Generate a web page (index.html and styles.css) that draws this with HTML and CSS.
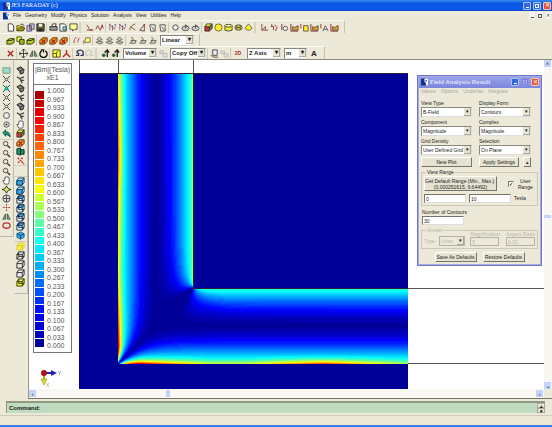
FILE: index.html
```html
<!DOCTYPE html>
<html lang="en">
<head>
    <meta charset="UTF-8">
    <meta name="viewport" content="width=device-width, initial-scale=1.0">
    <title>JES FARADAY (c)</title>
    <link rel="stylesheet" href="styles.css">
</head>
<body>
    <!-- Icon set -->
    <svg class="icon-defs" aria-hidden="true">
        <symbol id="new" viewBox="0 0 10 10"><path d="M2.500 1h4l2 2v6h-6z" fill="#fff" stroke="#333"/></symbol>
        <symbol id="open" viewBox="0 0 10 10"><path d="M1 8.500V3h3l1 1h3v4.500z" fill="#ed3" stroke="#550"/><path d="M1 8.500l2-3h7l-2 3z" fill="#aa2" stroke="#440"/><path d="M5 2l2-1 2 2" fill="none" stroke="#222"/></symbol>
        <symbol id="import" viewBox="0 0 10 10"><path d="M1 3h5v6H1zM4 1h5v6H4z" fill="#ccd" stroke="#447"/><path d="M3 5h4" stroke="#c44"/></symbol>
        <symbol id="save" viewBox="0 0 10 10"><path d="M1 1h8v8H1z" fill="#663" stroke="#111"/><path d="M3 1h4v3H3z" fill="#eee"/><path d="M3 6h4v3H3z" fill="#222"/></symbol>
        <symbol id="print" viewBox="0 0 10 10"><path d="M3 4l1-3h4L7 4z" fill="#fff" stroke="#333"/><path d="M1 4h8v4H1z" fill="#999" stroke="#333"/></symbol>
        <symbol id="preview" viewBox="0 0 10 10"><path d="M1 1h5l2 2v6H1z" fill="#fff" stroke="#333"/><circle cx="6" cy="6" r="2" fill="#8dd" stroke="#244"/></symbol>
        <symbol id="note" viewBox="0 0 10 10"><path d="M1 1h8v6H6L4 9V7H1z" fill="#ff9" stroke="#444"/></symbol>
        <symbol id="line" viewBox="0 0 10 10"><path d="M2 2l3 5 4 1H2" fill="none" stroke="#844"/></symbol>
        <symbol id="spline" viewBox="0 0 10 10"><path d="M1 7l2-4 3 5 2-6 1 4" fill="none" stroke="#833"/></symbol>
        <symbol id="points" viewBox="0 0 10 10"><path d="M2 1v7M5 3v6M8 1v4" stroke="#338" stroke-dasharray="2 1"/><path d="M2 2l6 5" stroke="#b33"/></symbol>
        <symbol id="arc" viewBox="0 0 10 10"><path d="M2 8c0-4 3-6 6-7M3 4l5 4" fill="none" stroke="#743"/></symbol>
        <symbol id="wedge" viewBox="0 0 10 10"><path d="M2 8l5-6v7z" fill="#eed" stroke="#544"/><circle cx="7" cy="2" r="1" fill="#a33"/></symbol>
        <symbol id="page" viewBox="0 0 10 10"><path d="M2 2h6v7H3zM4 4l3 4" fill="#eee" stroke="#554"/></symbol>
        <symbol id="circle" viewBox="0 0 10 10"><circle cx="5" cy="5" r="3" fill="#eee" stroke="#444"/></symbol>
        <symbol id="disc" viewBox="0 0 10 10"><ellipse cx="5" cy="6" rx="4" ry="2.500" fill="#ccc" stroke="#555"/><path d="M5 6V2l3 2" fill="none" stroke="#555"/></symbol>
        <symbol id="cube" viewBox="0 0 10 10"><path d="M1 4h5v5H1z" fill="#c33"/><path d="M1 4l2-3h6L6 4z" fill="#ee3"/><path d="M6 4l3-3v5L6 9z" fill="#484"/><path d="M1 4h5v5H1zM1 4l2-3h6v5L6 9M6 4l3-3" fill="none" stroke="#432"/></symbol>
        <symbol id="sphere" viewBox="0 0 10 10"><circle cx="5" cy="5" r="4" fill="#fe2" stroke="#663"/></symbol>
        <symbol id="cylinder" viewBox="0 0 10 10"><path d="M1 3v5q4 2 8 0V3" fill="#ee3" stroke="#443"/><ellipse cx="5" cy="3" rx="4" ry="1.500" fill="#ff8" stroke="#443"/></symbol>
        <symbol id="torus" viewBox="0 0 10 10"><ellipse cx="5" cy="5" rx="4" ry="3" fill="#dd4" stroke="#443"/><path d="M2 4l6 2M2 6l6-2" stroke="#443"/></symbol>
        <symbol id="cone" viewBox="0 0 10 10"><path d="M5 1l4 5q-4 4-8 0z" fill="#fe3" stroke="#663"/></symbol>
        <symbol id="coil" viewBox="0 0 10 10"><path d="M2 1v7h7M2 8l4-4v4" fill="none" stroke="#844"/></symbol>
        <symbol id="probe" viewBox="0 0 10 10"><path d="M2 1v3M1 4h3v4M5 2l3 3-2 4" fill="none" stroke="#833"/></symbol>
        <symbol id="probe-disc" viewBox="0 0 10 10"><path d="M2 1v7" stroke="#922"/><circle cx="6" cy="6" r="2.500" fill="#eee" stroke="#555"/></symbol>
        <symbol id="probe-box" viewBox="0 0 10 10"><path d="M1 1v5" stroke="#922"/><path d="M4 3h5v6H4z" fill="#fe3" stroke="#653"/></symbol>
        <symbol id="probe-fill" viewBox="0 0 10 10"><path d="M1 1v8h8" fill="none" stroke="#722"/><path d="M3 4l2 1 4-2v5H3z" fill="#da3" stroke="#643"/></symbol>
        <symbol id="probe-axis" viewBox="0 0 10 10"><path d="M1 1v5" stroke="#922"/><path d="M3 9l3-6 3 6M4 7h4" fill="none" stroke="#655"/></symbol>
        <symbol id="layer" viewBox="0 0 10 10"><path d="M1 5l3-2h5v4L6 9H1z" fill="#bc2" stroke="#230"/><path d="M1 5h5l3-2" fill="none" stroke="#230"/></symbol>
        <symbol id="layers" viewBox="0 0 10 10"><path d="M1 1h5v5H1z" fill="#ef5" stroke="#350"/><path d="M4 4h5v5H4z" fill="#ab2" stroke="#230"/></symbol>
        <symbol id="layer-red" viewBox="0 0 10 10"><path d="M1 5l3-3h5v4L6 9H1z" fill="#ea2" stroke="#520"/><path d="M3 4l4 4M7 4L3 8" stroke="#b20" stroke-width="1.500"/></symbol>
        <symbol id="slash" viewBox="0 0 10 10"><path d="M2 8q0-5 3-7M8 2L6 7" fill="none" stroke="#a44"/></symbol>
        <symbol id="flag" viewBox="0 0 10 10"><path d="M2 9V5M4 2h5v5H3z" fill="#ff8" stroke="#764"/></symbol>
        <symbol id="surf" viewBox="0 0 10 10"><path d="M1 7l3-1 5 1-3 2zM2 4l3-3 3 3-3 1z" fill="#ccc" stroke="#665"/></symbol>
        <symbol id="surf2" viewBox="0 0 10 10"><path d="M4 1l2 3-4 4 6 0 1-3H3" fill="#dca" stroke="#666"/></symbol>
        <symbol id="cross" viewBox="0 0 10 10"><path d="M2 2l6 6M8 2L2 8" stroke="#a22" stroke-width="1.500"/></symbol>
        <symbol id="move" viewBox="0 0 10 10"><path d="M5 0v10M0 5h10M3 2l2-2 2 2M3 8l2 2 2-2M2 3L0 5l2 2M8 3l2 2-2 2" fill="none" stroke="#333"/></symbol>
        <symbol id="mirror" viewBox="0 0 10 10"><path d="M4 2L1 8h3zM6 2l3 6H6z" fill="#9b9" stroke="#454"/></symbol>
        <symbol id="rotate" viewBox="0 0 10 10"><path d="M3 2a4 4 0 1 0 4 0M2 1h3v3" fill="none" stroke="#111" stroke-width="1.500"/></symbol>
        <symbol id="scale" viewBox="0 0 10 10"><path d="M1 1h8v8H1z" fill="#ff3" stroke="#442"/><path d="M1 5h4v4M4 5l3-3" fill="none" stroke="#442"/></symbol>
        <symbol id="axes" viewBox="0 0 10 10"><path d="M5 1v4L1 9M5 5l4 4" fill="none" stroke="#b22" stroke-width="1.500"/></symbol>
        <symbol id="undo" viewBox="0 0 10 10"><path d="M1 7h3V5q-3-1-1-3 4-2 6 1v4H6" fill="none" stroke="#336" stroke-width="1.500"/></symbol>
        <symbol id="redo" viewBox="0 0 10 10"><path d="M9 7H6V5q3-1 1-3-4-2-6 1v4h3" fill="none" stroke="#bbb"/></symbol>
        <symbol id="snap" viewBox="0 0 10 10"><path d="M7 1v8M4 4l3-3 2 3" fill="none" stroke="#222" stroke-width="1.500"/><circle cx="3" cy="7" r="2" fill="#363"/></symbol>
        <symbol id="copy" viewBox="0 0 10 10"><path d="M3 1h5v6H3zM1 7l3 2h5" fill="#eee" stroke="#444"/></symbol>
        <symbol id="copy-off" viewBox="0 0 10 10"><path d="M1 2h4v3H1zM4 5h5v4H5z" fill="#ddd" stroke="#bbb"/></symbol>
        <symbol id="grid" viewBox="0 0 10 10"><path d="M1 2h8v6H1z" fill="#9dc" stroke="#797"/></symbol>
        <symbol id="fit" viewBox="0 0 10 10"><path d="M1 1l3 3M9 1L6 4M1 9l3-3M9 9L6 6" stroke="#333"/><circle cx="5" cy="5" r="1.500" fill="#eee" stroke="#444"/></symbol>
        <symbol id="fit-teal" viewBox="0 0 10 10"><path d="M1 1l8 8M9 1L1 9" stroke="#133"/><path d="M5 1l3 6H2z" fill="#2a9"/></symbol>
        <symbol id="square" viewBox="0 0 10 10"><rect x="2" y="2" width="6" height="6" rx="2" fill="#eee" stroke="#444"/></symbol>
        <symbol id="target" viewBox="0 0 10 10"><circle cx="5" cy="5" r="3" fill="#ddd" stroke="#555"/><circle cx="5" cy="5" r="1" fill="#333"/></symbol>
        <symbol id="back" viewBox="0 0 10 10"><path d="M1 4l3-3v2q5 0 5 6-2-3-5-3v2z" fill="#298" stroke="#154"/></symbol>
        <symbol id="lens" viewBox="0 0 10 10"><circle cx="4" cy="4" r="2.500" fill="#edd" stroke="#544"/><path d="M6 6l3 3" stroke="#333" stroke-width="1.500"/></symbol>
        <symbol id="hand" viewBox="0 0 10 10"><path d="M3 9L1 5h2V2h1V1h3v1h1v5L7 9z" fill="#fff" stroke="#555"/></symbol>
        <symbol id="orbit" viewBox="0 0 10 10"><path d="M5 1l2 3 3 1-3 1-2 3-2-3-3-1 3-1z" fill="#dd6" stroke="#232"/></symbol>
        <symbol id="globe" viewBox="0 0 10 10"><circle cx="5" cy="5" r="4" fill="#ddd" stroke="#444"/><path d="M5 1v8M1 5h8" stroke="#444"/></symbol>
        <symbol id="origin" viewBox="0 0 10 10"><path d="M5 1v8M1 5h8" stroke="#a33" stroke-dasharray="2 1"/></symbol>
        <symbol id="ring" viewBox="0 0 10 10"><ellipse cx="5" cy="5" rx="4" ry="3" fill="none" stroke="#b33" stroke-width="1.500"/></symbol>
        <symbol id="blob" viewBox="0 0 10 10"><path d="M1 3l4-2 4 3-1 4-3 1-1-3z" fill="#555" stroke="#222"/><path d="M3 3l3 1M6 7l2-1" stroke="#bbb"/></symbol>
        <symbol id="twig" viewBox="0 0 10 10"><path d="M1 2l3 2 5-2M4 4l2 2h3M5 6l2 3" fill="none" stroke="#444" stroke-width="1.500"/></symbol>
        <symbol id="block-teal" viewBox="0 0 10 10"><path d="M1 2l4-1v8L1 8zM5 3h4v5H5z" fill="#196" stroke="#122"/></symbol>
        <symbol id="dots" viewBox="0 0 10 10"><path d="M2 2l3 3-3 3M6 2l2 2M6 6l3 3" fill="none" stroke="#c22" stroke-width="1.500" stroke-dasharray="2 1"/></symbol>
        <symbol id="box-blue" viewBox="0 0 10 10"><path d="M1 4l2-3h6v5L7 9H1z" fill="#9df" stroke="#135"/><path d="M1 4h6v5H1z" fill="#3ae" stroke="#135"/><path d="M7 4l2-3" stroke="#135"/></symbol>
        <symbol id="box-top" viewBox="0 0 10 10"><path d="M1 4l2-3h6v5L7 9H1z" fill="#eff" stroke="#124"/><path d="M1 4l2-3h6L7 4z" fill="#3ae" stroke="#124"/><path d="M7 4v5M3 1v5h6" fill="none" stroke="#124"/></symbol>
        <symbol id="box-iso" viewBox="0 0 10 10"><path d="M5 1l4 2v4L5 9 1 7V3z" fill="#3ae" stroke="#168"/><path d="M1 3l4 2 4-2M5 5v4" fill="none" stroke="#136"/></symbol>
        <symbol id="box-yellow" viewBox="0 0 10 10"><path d="M1 4l2-3h6v5L7 9H1z" fill="#fe3" stroke="#dc4"/><path d="M1 4h6v5" fill="none" stroke="#bb6"/></symbol>
        <symbol id="box-wire" viewBox="0 0 10 10"><path d="M1 4l2-3h6v5L7 9H1zM1 4h6v5M7 4l2-3" fill="#eee" stroke="#222"/></symbol>
        <symbol id="box-frame" viewBox="0 0 10 10"><path d="M1 4l2-3h6v5L7 9H1zM1 4h6v5M7 4l2-3M3 1v5h6M3 6L1 9" fill="#eee" stroke="#222"/></symbol>
        <symbol id="box-edge" viewBox="0 0 10 10"><path d="M1 4l2-3h6v5L7 9H1zM1 4h6v5M7 4l2-3M3 1v5h6" fill="#ee2" stroke="#330"/></symbol>
        <symbol id="logo" viewBox="0 0 10 10"><path d="M0 0h10v10H0z" fill="#12309a"/><path d="M5 0h5v10H7V6L5 5z" fill="#fff"/><path d="M6 2l3 1-2 2z" fill="#12309a"/></symbol>
    </svg>

    <!-- Title bar -->
    <header class="titlebar">
        <svg class="logo"><use href="#logo"/></svg>
        <h1>JES FARADAY (c)</h1>
        <div class="win-buttons">
            <button aria-label="Minimize"><span class="min"></span></button>
            <button aria-label="Restore"><span class="max"></span></button>
            <button class="close" aria-label="Close">✕</button>
        </div>
    </header>

    <!-- Menu -->
    <nav class="menubar">
        <svg class="logo"><use href="#logo"/></svg>
        <a href="#file">File</a>
        <a href="#geometry">Geometry</a>
        <a href="#modify">Modify</a>
        <a href="#physics">Physics</a>
        <a href="#solution">Solution</a>
        <a href="#analysis">Analysis</a>
        <a href="#view">View</a>
        <a href="#utilities">Utilities</a>
        <a href="#help">Help</a>
        <div class="doc-buttons">
            <button aria-label="Minimize document"><span class="min"></span></button>
            <button aria-label="Restore document"><span class="max"></span></button>
            <button aria-label="Close document">✕</button>
        </div>
    </nav>

    <!-- Toolbars -->
    <div class="toolbars">
        <div class="toolbar">
            <div class="group">
                <button aria-label="New"><svg><use href="#new"/></svg></button>
                <button aria-label="Open"><svg><use href="#open"/></svg></button>
                <button aria-label="Import"><svg><use href="#import"/></svg></button>
                <button aria-label="Save"><svg><use href="#save"/></svg></button>
            </div>
            <div class="group">
                <button aria-label="Print"><svg><use href="#print"/></svg></button>
                <button aria-label="Preview"><svg><use href="#preview"/></svg></button>
                <button aria-label="Note"><svg><use href="#note"/></svg></button>
            </div>
            <div class="group wide">
                <button aria-label="Line"><svg><use href="#line"/></svg></button>
                <button aria-label="Spline"><svg><use href="#spline"/></svg></button>
            </div>
            <div class="group">
                <button aria-label="Points"><svg><use href="#points"/></svg></button>
                <button aria-label="Point list"><svg><use href="#points"/></svg></button>
                <button aria-label="Arc"><svg><use href="#arc"/></svg></button>
                <button aria-label="Wedge"><svg><use href="#wedge"/></svg></button>
                <button aria-label="Polygon"><svg><use href="#page"/></svg></button>
                <button aria-label="Closed polygon"><svg><use href="#page"/></svg></button>
            </div>
            <div class="group">
                <button aria-label="Circle"><svg><use href="#circle"/></svg></button>
                <button aria-label="Disc"><svg><use href="#disc"/></svg></button>
                <button aria-label="Ellipse"><svg><use href="#disc"/></svg></button>
            </div>
            <div class="group">
                <button aria-label="Cube"><svg><use href="#cube"/></svg></button>
                <button aria-label="Sphere"><svg><use href="#sphere"/></svg></button>
                <button aria-label="Cylinder"><svg><use href="#cylinder"/></svg></button>
                <button aria-label="Torus"><svg><use href="#torus"/></svg></button>
                <button aria-label="Cone"><svg><use href="#cone"/></svg></button>
            </div>
            <div class="group wide">
                <button aria-label="Coil"><svg><use href="#coil"/></svg></button>
                <button aria-label="Probe"><svg><use href="#probe"/></svg></button>
                <button aria-label="Probe disc"><svg><use href="#probe-disc"/></svg></button>
                <button aria-label="Probe fill"><svg><use href="#probe-fill"/></svg></button>
                <button aria-label="Probe box"><svg><use href="#probe-box"/></svg></button>
                <button aria-label="Probe volume"><svg><use href="#probe-fill"/></svg></button>
                <button aria-label="Probe axis"><svg><use href="#probe-axis"/></svg></button>
                <button aria-label="Probe all"><svg><use href="#probe-fill"/></svg></button>
            </div>
        </div>
        <div class="toolbar">
            <div class="group">
                <button aria-label="Layer"><svg><use href="#layer"/></svg></button>
                <button aria-label="Layers"><svg><use href="#layers"/></svg></button>
                <button aria-label="Active layer"><svg><use href="#layer"/></svg></button>
            </div>
            <div class="group">
                <button aria-label="Hide layer"><svg><use href="#layer-red"/></svg></button>
                <button aria-label="Lock layer"><svg><use href="#layer-red"/></svg></button>
                <button aria-label="Delete layer"><svg><use href="#layer-red"/></svg></button>
            </div>
            <div class="group">
                <button aria-label="Split"><svg><use href="#slash"/></svg></button>
                <button aria-label="Flag"><svg><use href="#flag"/></svg></button>
            </div>
            <div class="group">
                <button aria-label="Surface"><svg><use href="#surf"/></svg></button>
                <button aria-label="Join surface"><svg><use href="#surf"/></svg></button>
                <button aria-label="Trim surface"><svg><use href="#surf"/></svg></button>
            </div>
            <div class="group">
                <button aria-label="Sweep"><svg><use href="#surf2"/></svg></button>
                <button aria-label="Loft"><svg><use href="#surf2"/></svg></button>
                <button aria-label="Extrude"><svg><use href="#surf2"/></svg></button>
            </div>
            <span class="pick"><select aria-label="Interpolation"><option>Linear</option></select></span>
        </div>
        <div class="toolbar">
            <div class="group">
                <button aria-label="Delete"><svg><use href="#cross"/></svg></button>
            </div>
            <div class="group">
                <button aria-label="Move"><svg><use href="#move"/></svg></button>
                <button aria-label="Mirror"><svg><use href="#mirror"/></svg></button>
                <button aria-label="Rotate"><svg><use href="#rotate"/></svg></button>
            </div>
            <div class="group">
                <button aria-label="Scale"><svg><use href="#scale"/></svg></button>
                <button aria-label="Axes"><svg><use href="#axes"/></svg></button>
            </div>
            <div class="group">
                <button aria-label="Undo"><svg><use href="#undo"/></svg></button>
                <button aria-label="Redo"><svg><use href="#redo"/></svg></button>
            </div>
            <div class="group wide">
                <button aria-label="Snap"><svg><use href="#snap"/></svg></button>
                <button aria-label="Snap to grid"><svg><use href="#snap"/></svg></button>
            </div>
            <span class="pick"><select aria-label="Entity"><option>Volume</option></select></span>
            <button aria-label="Copy selection"><svg><use href="#copy-off"/></svg></button>
            <span class="pick copy-mode"><select aria-label="Copy mode"><option>Copy Off</option></select></span>
            <div class="group">
                <button aria-label="Copy"><svg><use href="#copy"/></svg></button>
                <button aria-label="Paste"><svg><use href="#copy-off"/></svg></button>
            </div>
            <div class="group">
                <button class="two-d">2D</button>
            </div>
            <span class="pick"><select aria-label="Axis"><option>Z Axis</option></select></span>
            <span class="pick unit"><select aria-label="Unit"><option>m</option></select></span>
            <button class="font-a">A</button>
        </div>
    </div>

    <!-- Work area -->
    <main class="work">
        <div class="side">
            <div class="sidebar">
                <button aria-label="Grid"><svg><use href="#grid"/></svg></button>
                <button aria-label="Fit"><svg><use href="#fit"/></svg></button>
                <button aria-label="Fit selection"><svg><use href="#fit-teal"/></svg></button>
                <button aria-label="Expand"><svg><use href="#fit"/></svg></button>
                <button aria-label="Shrink"><svg><use href="#fit"/></svg></button>
                <button aria-label="Window"><svg><use href="#square"/></svg></button>
                <button aria-label="Center"><svg><use href="#target"/></svg></button>
                <button aria-label="Previous view"><svg><use href="#back"/></svg></button>
                <hr>
                <button aria-label="Zoom in"><svg><use href="#lens"/></svg></button>
                <button aria-label="Zoom out"><svg><use href="#lens"/></svg></button>
                <button aria-label="Zoom window"><svg><use href="#lens"/></svg></button>
                <button aria-label="Zoom all"><svg><use href="#lens"/></svg></button>
                <button aria-label="Pan"><svg><use href="#hand"/></svg></button>
                <button aria-label="Orbit"><svg><use href="#orbit"/></svg></button>
                <button aria-label="Globe"><svg><use href="#globe"/></svg></button>
                <button aria-label="Origin"><svg><use href="#origin"/></svg></button>
                <button aria-label="Mirror view"><svg><use href="#mirror"/></svg></button>
                <button aria-label="Ring"><svg><use href="#ring"/></svg></button>
            </div>
            <div class="sidebar">
                <button aria-label="Body"><svg><use href="#blob"/></svg></button>
                <button aria-label="Edges"><svg><use href="#twig"/></svg></button>
                <button aria-label="Bodies"><svg><use href="#blob"/></svg></button>
                <button aria-label="Edge set"><svg><use href="#twig"/></svg></button>
                <button aria-label="Solid"><svg><use href="#blob"/></svg></button>
                <button aria-label="Curve"><svg><use href="#twig"/></svg></button>
                <button aria-label="Grab"><svg><use href="#hand"/></svg></button>
                <button aria-label="Material"><svg><use href="#cube"/></svg></button>
                <button aria-label="Source"><svg><use href="#layer-red"/></svg></button>
                <button aria-label="Region"><svg><use href="#block-teal"/></svg></button>
                <button aria-label="Nodes"><svg><use href="#dots"/></svg></button>
                <hr class="tall">
                <button aria-label="Front"><svg><use href="#box-blue"/></svg></button>
                <button aria-label="Back"><svg><use href="#box-blue"/></svg></button>
                <button aria-label="Top"><svg><use href="#box-top"/></svg></button>
                <button aria-label="Bottom"><svg><use href="#box-top"/></svg></button>
                <button aria-label="Left"><svg><use href="#box-top"/></svg></button>
                <button aria-label="Right"><svg><use href="#box-top"/></svg></button>
                <button aria-label="Isometric"><svg><use href="#box-iso"/></svg></button>
                <hr>
                <button aria-label="Shaded"><svg><use href="#box-yellow"/></svg></button>
                <button aria-label="Wireframe"><svg><use href="#box-frame"/></svg></button>
                <button aria-label="Hidden lines"><svg><use href="#box-wire"/></svg></button>
                <button aria-label="Outline"><svg><use href="#box-wire"/></svg></button>
                <button aria-label="Shaded edges"><svg><use href="#box-edge"/></svg></button>
            </div>
        </div>

        <div class="viewport">
            <div class="view">
                <canvas id="plot"></canvas>

                <!-- Contour scale -->
                <section class="scale">
                    <h2>|Bm|(Tesla)<br>xE1</h2>
                    <div class="scale-body">
                        <div class="scale-bar" id="scale-bar"></div>
                        <ol>
                            <li>1.000</li>
                            <li>0.967</li>
                            <li>0.933</li>
                            <li>0.900</li>
                            <li>0.867</li>
                            <li>0.833</li>
                            <li>0.800</li>
                            <li>0.767</li>
                            <li>0.733</li>
                            <li>0.700</li>
                            <li>0.667</li>
                            <li>0.633</li>
                            <li>0.600</li>
                            <li>0.567</li>
                            <li>0.533</li>
                            <li>0.500</li>
                            <li>0.467</li>
                            <li>0.433</li>
                            <li>0.400</li>
                            <li>0.367</li>
                            <li>0.333</li>
                            <li>0.300</li>
                            <li>0.267</li>
                            <li>0.233</li>
                            <li>0.200</li>
                            <li>0.167</li>
                            <li>0.133</li>
                            <li>0.100</li>
                            <li>0.067</li>
                            <li>0.033</li>
                            <li>0.000</li>
                        </ol>
                    </div>
                </section>

                <svg class="triad" viewBox="0 0 24 20">
                    <path d="M4 4h10" stroke="#22b" stroke-width="2"/>
                    <path d="M11 1l6 3-6 3z" fill="#22b"/>
                    <path d="M4 4v9" stroke="#aa2" stroke-width="2"/>
                    <path d="M1 10h6l-3 6z" fill="#dd2" stroke="#872" stroke-width=".5"/>
                    <circle cx="4" cy="4" r="3" fill="#a11"/>
                    <text x="18" y="6" fill="#55c">Y</text>
                    <text x="6" y="18" fill="#aa4">X</text>
                </svg>
            </div>
            <div class="vscroll"><span class="thumb"></span><button aria-label="Scroll up">^</button><button aria-label="Scroll down">⌄</button></div>
            <div class="hscroll"><button aria-label="Scroll left">‹</button><span class="thumb"></span><button aria-label="Scroll right">›</button></div>

            <!-- Result window -->
            <form class="dialog">
                <header>
                    <svg class="logo"><use href="#logo"/></svg>
                    <h2>Field Analysis Result</h2>
                    <div class="win-buttons">
                        <button type="button" aria-label="Minimize"><span class="min"></span></button>
                        <button type="button" class="off" aria-label="Maximize"><span class="max"></span></button>
                        <button type="button" class="close" aria-label="Close">✕</button>
                    </div>
                </header>
                <nav>
                    <a href="#values">Values</a>
                    <a href="#options">Options</a>
                    <a href="#underlax">Underlax</a>
                    <a href="#integrate">Integrate</a>
                </nav>
                <div class="fields">
                    <label>View Type <span class="pick"><select><option>B-Field</option></select></span></label>
                    <label>Display Form <span class="pick"><select><option>Contours</option></select></span></label>
                    <label>Component <span class="pick"><select><option>Magnitude</option></select></span></label>
                    <label>Complex <span class="pick"><select><option>Magnitude</option></select></span></label>
                    <label>Grid Density <span class="pick"><select><option>User Defined Grid</option></select></span></label>
                    <label>Selection <span class="pick"><select><option>On Plane</option></select></span></label>
                    <button type="button" class="btn">New Plot</button>
                    <div class="apply">
                        <button type="button" class="btn">Apply Settings</button>
                        <button type="button" class="btn" aria-label="Collapse">▴</button>
                    </div>
                </div>
                <fieldset>
                    <legend>View Range</legend>
                    <div class="row">
                        <button type="button" class="btn range">Get Default Range (Min., Max.) :<br>(0.000251615, 9.64492)</button>
                        <label class="check"><input type="checkbox" checked> <span>User<br>Range</span></label>
                    </div>
                    <div class="row limits">
                        <input type="text" value="0" aria-label="Range minimum">
                        <input type="text" value="10" aria-label="Range maximum">
                        <span>Tesla</span>
                    </div>
                </fieldset>
                <label class="contours">Number of Contours <input type="text" value="30"></label>
                <fieldset class="arrows" disabled>
                    <legend>Arrows</legend>
                    <label class="type">Type: <span class="pick"><select disabled><option>Lines</option></select></span></label>
                    <label>Magnification: <input type="text" value="5" disabled></label>
                    <label>Aspect Ratio: <input type="text" value="0.02" disabled></label>
                </fieldset>
                <div class="actions">
                    <button type="button" class="btn">Save As Defaults</button>
                    <button type="button" class="btn">Restore Defaults</button>
                </div>
            </form>
        </div>
    </main>

    <!-- Command line -->
    <div class="command">
        <label for="cmd">Command:</label>
        <input type="text" id="cmd">
        <div class="spin">
            <button aria-label="Previous command">▴</button>
            <button aria-label="Next command">▾</button>
        </div>
    </div>
    <footer class="status"></footer>

    <script src="plot.js"></script>
</body>
</html>
```

FILE: styles.css
```css
* {
    box-sizing: border-box;
}
body {
    margin: 0;
    min-height: 100vh;
    display: flex;
    flex-direction: column;
    background-color: #ece9d8;
    color: #222;
    font-family: "Liberation Sans", Arial, sans-serif;
    font-size: 5px;
    line-height: 7px;
}
button, input, select {
    font: inherit;
    color: inherit;
    margin: 0;
    padding: 0;
    border: 0;
    border-radius: 0;
    background: none;
    min-width: 0;
}
a {
    color: inherit;
    text-decoration: none;
}
h1, h2 {
    margin: 0;
    font-size: 6px;
}
.icon-defs {
    display: none;
}
.logo {
    width: 7px;
    height: 8px;
    flex: none;
}

/* Title bar */
.titlebar {
    display: flex;
    align-items: center;
    gap: 1px;
    height: 11px;
    padding: 0 1px 0 3px;
    background: linear-gradient(#3a8cf5, #0a55e0 30%, #0a5cf0 80%, #0846c0);
    color: #fff;
}
.titlebar h1 {
    font-family: "Liberation Serif", serif;
    font-weight: normal;
}
.win-buttons, .doc-buttons {
    display: flex;
    gap: 2px;
    margin-left: auto;
}
.win-buttons button {
    width: 8px;
    height: 8px;
    display: flex;
    align-items: center;
    justify-content: center;
    border: 1px solid #a9c4f5;
    border-radius: 1px;
    background-color: #3468dc;
    color: #fff;
    font-size: 6px;
}
.win-buttons .close {
    background-color: #e25a38;
    border-color: #f5c4b8;
}
.min {
    width: 3px;
    height: 1px;
    margin-top: 3px;
    background-color: currentColor;
}
.max {
    width: 4px;
    height: 4px;
    border: 1px solid currentColor;
}

/* Menu */
.menubar {
    display: flex;
    align-items: center;
    gap: 4px;
    height: 9px;
    padding: 0 1px 0 3px;
}
.menubar .logo {
    margin-right: -1px;
}
.doc-buttons button {
    width: 6px;
    height: 7px;
    display: flex;
    align-items: center;
    justify-content: center;
    background-color: #f6f5ef;
    color: #555;
}

/* Toolbars */
.toolbars {
    border-bottom: 1px solid #8d8b7f;
}
.toolbar {
    display: flex;
    align-items: center;
    width: fit-content;
    height: 13px;
    padding: 0 4px;
    border-top: 1px solid #fbfaf5;
    border-right: 1px solid #c5c2b2;
}
.toolbar button {
    width: 10px;
    height: 11px;
    display: flex;
    align-items: center;
    justify-content: center;
}
.toolbar svg {
    width: 9px;
    height: 9px;
}
.group {
    display: flex;
    padding: 0 1px;
    border-left: 1px solid #cdcaba;
}
.group:first-child {
    border-left: 0;
}
.group.wide {
    padding-left: 3px;
    border-left: 2px solid #d5d2c4;
}
.pick {
    display: flex;
    align-items: center;
    height: 10px;
    background-color: #fff;
    border: 1px solid;
    border-color: #8a897f #ddd #ddd #8a897f;
}
.pick select {
    flex: 1;
    height: 8px;
    padding-left: 1px;
    appearance: none;
    line-height: 8px;
}
.pick::after {
    content: "▾";
    width: 6px;
    height: 7px;
    line-height: 6px;
    text-align: center;
    color: #111;
    background-color: #e6e3d4;
    border: 1px solid #aaa89c;
    border-width: 0 1px 1px 0;
}
.toolbar .pick {
    width: 34px;
    height: 11px;
    margin: 0 1px 0 2px;
    font-size: 6px;
    font-weight: bold;
}
.toolbar .copy-mode {
    width: 36px;
}
.toolbar .unit {
    width: 23px;
}
.toolbar .two-d {
    width: 12px;
    color: #a22;
    font-weight: bold;
}
.toolbar .font-a {
    width: 12px;
    font-size: 8px;
    font-weight: bold;
}

/* Work area */
.work {
    flex: 1;
    display: flex;
}
.side {
    display: flex;
    align-items: flex-start;
    width: 28px;
    flex: none;
}
.sidebar {
    flex: 1;
    display: flex;
    flex-direction: column;
    align-items: center;
    padding: 6px 0;
    border-right: 1px solid #bfbcad;
    border-bottom: 1px solid #bfbcad;
}
.sidebar button {
    height: 9px;
    width: 11px;
}
.sidebar svg {
    display: block;
    width: 9px;
    height: 9px;
    margin: auto;
}
.sidebar hr {
    width: 100%;
    margin: 0;
    border: 0;
    height: 2px;
    border-bottom: 1px solid #d0cdbd;
}
.sidebar .tall {
    height: 12px;
    border-top: 1px solid #d0cdbd;
}
.viewport {
    position: relative;
    flex: 1;
    min-width: 0;
    display: grid;
    grid-template-columns: 1fr 8px;
    grid-template-rows: 1fr 9px;
    border-left: 1px solid #9a988c;
    border-bottom: 1px solid #77756a;
}
.view {
    position: relative;
    overflow: hidden;
    background-color: #fff;
}
#plot {
    position: absolute;
    top: 0;
    left: 0;
}
.vscroll, .hscroll {
    display: flex;
    background-color: #f8f7f2;
}
.vscroll {
    position: relative;
    flex-direction: column;
    justify-content: space-between;
}
.vscroll .thumb {
    position: absolute;
    top: 47%;
    width: 7px;
    height: 3px;
    background-color: #c3d3fa;
}
.hscroll {
    align-items: center;
    justify-content: space-between;
    padding-right: 1px;
}
.hscroll .thumb {
    width: 4px;
    height: 7px;
    margin-right: 46%;
    background-color: #c3d3fa;
}
.vscroll button, .hscroll button {
    width: 7px;
    height: 7px;
    background-color: #c3d3fa;
    color: #345;
    font-weight: bold;
    line-height: 6px;
}

/* Contour scale */
.scale {
    position: absolute;
    top: 3px;
    left: 4px;
    width: 39px;
    border: 1px solid #77777f;
    background-color: #fff;
    font-size: 7px;
    color: #555;
}
.scale h2 {
    padding: 2px 0;
    font-size: 7px;
    font-weight: normal;
    line-height: 8px;
    text-align: center;
    white-space: nowrap;
    border-bottom: 1px solid #77777f;
}
.scale-body {
    display: flex;
    gap: 3px;
    height: 267px;
    padding: 2px 1px 1px;
}
.scale-bar {
    flex: none;
    width: 9px;
    display: flex;
    flex-direction: column;
    gap: 1px;
    padding: 4px 0;
}
.scale-bar i {
    flex: 1;
}
.scale ol {
    flex: 1;
    display: grid;
    grid-auto-rows: 1fr;
    margin: 0;
    padding: 0;
    list-style: none;
    line-height: 8px;
}
.triad {
    position: absolute;
    left: 11px;
    bottom: 0;
    width: 24px;
    height: 20px;
    font-size: 5px;
}

/* Result window */
.dialog {
    position: absolute;
    top: 15px;
    right: 10px;
    width: 125px;
    border: 1px solid #6f74cc;
    outline: 1px solid #a8abe0;
    outline-offset: -2px;
    background-color: #ece9d8;
}
.dialog header {
    display: flex;
    align-items: center;
    gap: 2px;
    height: 12px;
    padding: 0 2px 0 3px;
    background: linear-gradient(#9aa6ea, #7b86dc);
    color: #dde1fb;
}
.dialog .win-buttons .off {
    border-color: #8c95e0;
    background-color: #7a84da;
    color: #a4abec;
}
.dialog nav {
    display: flex;
    gap: 5px;
    padding: 0 3px;
    color: #aaa798;
}
.fields {
    display: grid;
    grid-template-columns: 51px 52px;
    gap: 2px 7px;
    padding: 5px 3px 2px;
}
.fields label, .contours, .arrows label {
    display: block;
}
.btn {
    height: 10px;
    border: 1px solid;
    border-color: #fff #77756a #77756a #fff;
    background-color: #e6e3d3;
    text-align: center;
    line-height: 7px;
    white-space: nowrap;
}
.apply {
    display: grid;
    grid-template-columns: 1fr 8px;
    gap: 4px;
}
fieldset {
    min-width: 0;
    margin: 0 3px;
    padding: 0 2px 2px;
    border: 1px solid #cbc8b8;
}
legend {
    padding: 0 1px;
    margin-left: 2px;
}
.row {
    display: flex;
    align-items: center;
    gap: 3px;
}
.range {
    width: 73px;
    height: 15px;
    line-height: 6px;
}
.check {
    display: flex;
    align-items: center;
    gap: 4px;
    margin-left: 8px;
    line-height: 6px;
    text-align: center;
}
.check input {
    display: flex;
    align-items: center;
    justify-content: center;
    width: 6px;
    height: 6px;
    appearance: none;
    background-color: #fff;
    border: 1px solid;
    border-color: #77756a #ddd #ddd #77756a;
}
.check input:checked::before {
    content: "✓";
    font-weight: bold;
    color: #000;
}
.dialog input[type="text"] {
    display: block;
    width: 42px;
    height: 9px;
    padding: 0 1px;
    background-color: #fff;
    border: 1px solid;
    border-color: #77756a #ddd #ddd #77756a;
}
.limits {
    margin-top: 3px;
}
.contours {
    padding: 3px 4px;
}
.arrows {
    display: flex;
    align-items: flex-end;
    gap: 5px;
    height: 21px;
    color: #b9b6a6;
}
.arrows legend {
    height: 5px;
    line-height: 5px;
}
.arrows .type {
    display: flex;
    align-items: center;
    gap: 3px;
}
.arrows .pick, .dialog .arrows input[type="text"] {
    background-color: #ece9d8;
    border-color: #b5b2a3;
}
.arrows .pick {
    width: 26px;
}
.arrows label {
    white-space: nowrap;
    line-height: 6px;
}
.dialog .arrows input[type="text"] {
    width: 29px;
}
.arrows select, .arrows input {
    opacity: 1;
}
.actions {
    display: flex;
    justify-content: center;
    gap: 6px;
    padding: 3px 0;
}
.actions .btn {
    width: 42px;
}

/* Command line */
.command {
    display: flex;
    align-items: center;
    margin: 2px 7px 2px 6px;
    height: 12px;
    padding-left: 2px;
    border-top: 2px solid #8f9a80;
    border-left: 1px solid #8f9a80;
    background-color: #c0dcc0;
    font-size: 6px;
    font-weight: bold;
}
.command input {
    flex: 1;
    height: 8px;
}
.spin {
    display: flex;
    flex-direction: column;
}
.spin button {
    width: 8px;
    height: 5px;
    font-size: 5px;
    line-height: 4px;
    border: 1px solid #aaa89c;
    background-color: #ece9d8;
}
.status {
    height: 12px;
    border-top: 1px solid #cfccbc;
    border-bottom: 2px solid #3a80e0;
}
```

FILE: plot.js
```js
const canvas = document.getElementById('plot');
const view = canvas.parentElement;
const ctx = canvas.getContext('2d');

// Model outline in view pixels
const left = 50, top0 = 13, right = 379;
const x0 = 89, x1 = 164;
const y1 = 228, y0 = 304;

// Rainbow scale, 0 = dark blue, 1 = dark red
function rainbow(v) {
    const stops = [
        [0, 0, 0, 152], [0.12, 0, 0, 255], [0.4, 0, 255, 255],
        [0.63, 255, 255, 0], [0.9, 255, 0, 0], [1, 170, 0, 0]
    ];
    v = Math.max(0, Math.min(1, v));
    let i = 1;
    while (v > stops[i][0]) i++;
    const a = stops[i - 1], b = stops[i];
    const t = (v - a[0]) / (b[0] - a[0]);
    return [1, 2, 3].map(k => Math.round(a[k] + (b[k] - a[k]) * t));
}

// Linear interpolation in a list of [position, value]
function along(list, t) {
    for (let i = 1; i < list.length; i++) {
        if (t <= list[i][0]) {
            const a = list[i - 1], b = list[i];
            return a[1] + (b[1] - a[1]) * (t - a[0]) / (b[0] - a[0]);
        }
    }
    return list[list.length - 1][1];
}

const edgeV = [[0, 0.8], [18, 1], [45, 0.85], [90, 0.66], [140, 0.7], [210, 0.85], [292, 0.68]];
const edgeH = [[0, 0.8], [22, 1], [50, 0.8], [90, 0.6], [130, 0.6], [205, 0.88], [250, 0.68], [292, 0.54]];

function decay(d) {
    return d < 38 ? Math.pow(1 - d / 38, 1.5) : 0;
}

function field(x, y) {
    const a = x - x0, b = y0 - y;
    const d = Math.min(a, b), t = Math.max(a, b);
    const peak = along(b > a ? edgeV : edgeH, t);
    let v = (0.5 * decay(d) + (peak - 0.5) * Math.exp(-d / 3)) * (1 - Math.exp(-(t - d) / (0.6 * d + 3)));
    // Inner edges fade out at the inside corner
    const p = x1 - x, q = y - y1;
    if (p > 0) {
        v += (0.48 * decay(p) + 0.1 * Math.exp(-p)) * (1 - Math.exp(-Math.max(0, p * 0.5 - q) / (p * 0.8 + 2)));
    }
    if (q > 0) {
        v += 0.46 * decay(q) * (1 - Math.exp(-Math.max(0, q * 0.5 - p) / (q * 0.8 + 2)));
    }
    return Math.round(v * 60) / 60;
}

function draw() {
    const w = canvas.width = view.clientWidth;
    const h = canvas.height = view.clientHeight;

    ctx.fillStyle = '#555';
    [left, x0, x1].forEach(x => ctx.fillRect(x, 0, 1, top0));
    [y1, y0 - 1].forEach(y => ctx.fillRect(right, y, w - right, 1));

    ctx.fillStyle = 'rgb(0, 0, 152)';
    ctx.fillRect(left, top0, right - left, h - top0);

    for (let y = top0; y < y0; y++) {
        for (let x = x0; x < right; x++) {
            if (x >= x1 && y < y1) continue;
            ctx.fillStyle = 'rgb(' + rainbow(field(x + 0.5, y + 0.5)).join(',') + ')';
            ctx.fillRect(x, y, 1, 1);
        }
    }

    ctx.fillStyle = '#223';
    ctx.fillRect(left, top0, right - left, 1);
    ctx.fillRect(x1, top0, 1, y1 - top0);
    ctx.fillRect(x1, y1, right - x1, 1);
}

// Scale cells, from high to low
const bar = document.getElementById('scale-bar');
for (let i = 0; i < 30; i++) {
    const cell = document.createElement('i');
    cell.style.backgroundColor = 'rgb(' + rainbow(1 - i / 29).join(',') + ')';
    bar.appendChild(cell);
}

draw();
window.addEventListener('resize', draw);
```
